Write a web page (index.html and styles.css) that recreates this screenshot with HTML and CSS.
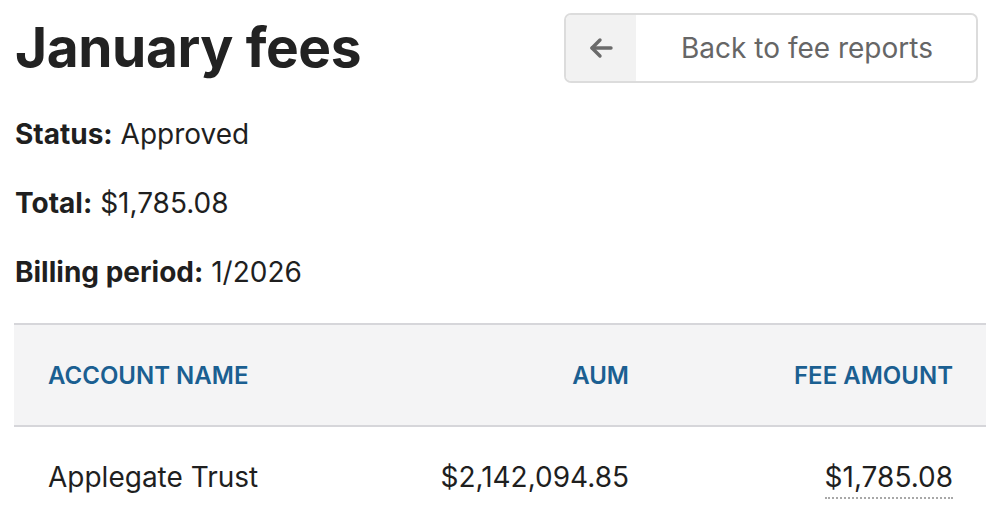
FILE: index.html
```html
<!DOCTYPE html>
<html lang="en">
<head>
  <meta charset="UTF-8" />
  <meta name="viewport" content="width=device-width, initial-scale=1.0" />
  <link rel="stylesheet" href="styles.css">
</head>
<body>
  <div class="page">
    <div class="top-bar">
      <h1 class="title">January fees</h1>
      <a class="back-button" href="#">
        <span class="back-icon">
          <svg width="26" height="22" viewBox="0 0 26 22" fill="none" stroke="#6b6b6b" stroke-width="3.4" stroke-linecap="round" stroke-linejoin="round">
            <path d="M23 11H4" />
            <path d="M12 3L4 11l8 8" />
          </svg>
        </span>
        <span class="back-text">Back to fee reports</span>
      </a>
    </div>

    <div class="meta-list">
      <p class="meta"><b>Status:</b> Approved</p>
      <p class="meta"><b>Total:</b> $1,785.08</p>
      <p class="meta"><b>Billing period:</b> 1/2026</p>
    </div>

    <!-- Fee table -->
    <table class="fee-table">
      <thead>
        <tr>
          <th>Account name</th>
          <th class="num">AUM</th>
          <th class="num">Fee amount</th>
        </tr>
      </thead>
      <tbody>
        <tr>
          <td>Applegate Trust</td>
          <td class="num">$2,142,094.85</td>
          <td class="num"><span class="fee-link">$1,785.08</span></td>
        </tr>
      </tbody>
    </table>
  </div>
</body>
</html>
```

FILE: styles.css
```css
body {
  margin: 0;
  background-color: #ffffff;
  font-family: 'Inter', 'Noto Sans', sans-serif;
  color: #1f1f1f;
}

.page {
  padding: 0 14px 0 15px;
}

.top-bar {
  display: flex;
  justify-content: space-between;
  align-items: flex-start;
  padding-top: 13px;
}

.title {
  margin: 0;
  padding-top: 2px;
  font-size: 55px;
  font-weight: 700;
  letter-spacing: -0.4px;
  line-height: 64px;
  color: #222222;
}

.back-button {
  display: flex;
  align-items: stretch;
  width: 414px;
  height: 70px;
  margin-right: 8px;
  box-sizing: border-box;
  border: 2px solid #dcdcdc;
  border-radius: 7px;
  overflow: hidden;
  text-decoration: none;
}

.back-icon {
  display: flex;
  align-items: center;
  justify-content: center;
  width: 70px;
  background-color: #f2f2f2;
}

.back-text {
  display: flex;
  align-items: center;
  justify-content: center;
  flex: 1;
  font-size: 28px;
  color: #666666;
  padding-left: 2px;
}

.meta-list {
  margin-top: 17px;
}

.meta {
  margin: 0;
  font-size: 28px;
  line-height: 69px;
  color: #1f1f1f;
}

.meta b {
  font-weight: 700;
}

.fee-table {
  width: 972px;
  margin-top: 16px;
  margin-left: -1px;
  border-collapse: collapse;
  table-layout: fixed;
}

.fee-table th {
  height: 100px;
  padding: 0 33px 0 34px;
  background-color: #f4f4f5;
  border-top: 2px solid #d6d6da;
  border-bottom: 2px solid #d6d6da;
  text-align: left;
  text-transform: uppercase;
  font-size: 24px;
  font-weight: 600;
  color: #1b5f91;
}

.fee-table td {
  height: 100px;
  padding: 0 33px 0 34px;
  font-size: 28px;
  color: #1f1f1f;
}

.fee-table .num {
  text-align: right;
}

.fee-link {
  border-bottom: 2px dotted #a8a8a8;
  padding-bottom: 3px;
}
```
